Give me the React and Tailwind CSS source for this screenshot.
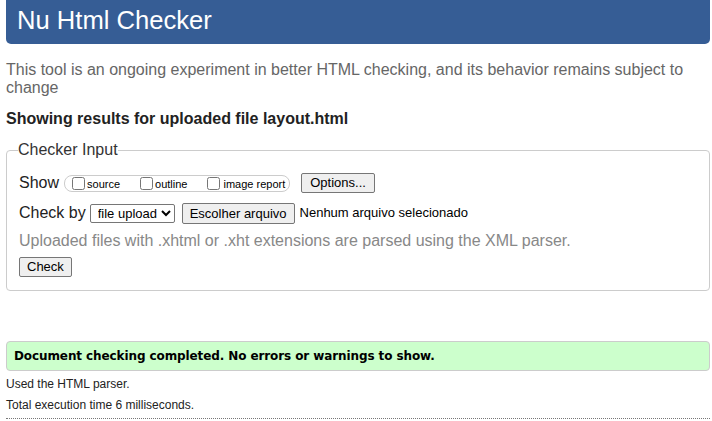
import React from 'react';

export default function App() {
  return (
    <div className="min-h-screen bg-white pl-[6px] pr-[2px] text-black font-['Liberation_Sans',Arial,sans-serif]">
      {/* Header */}
      <h1 className="h-[44px] rounded-b-[5px] bg-[#365d95] pl-[11px] pt-[5px] text-[25.6px] leading-[30px] font-normal text-white">
        Nu Html Checker
      </h1>

      <p className="mt-[17px] text-[16px] leading-[18px] text-[#666]">
        This tool is an ongoing experiment in better HTML checking, and its behavior remains subject to change
      </p>

      <p className="mt-[13px] text-[16px] leading-[18px] font-bold text-[#222]">
        Showing results for uploaded file layout.html
      </p>

      {/* Checker input */}
      <fieldset className="mt-[13px] rounded-[4px] border border-[#ccc] px-[12px] pb-[12px] pt-[4px]">
        <legend className="px-0 text-[16px] leading-[18px] text-[#333] -ml-[1px]">Checker Input</legend>

        <div className="flex items-center h-[22px] mt-[9px]">
          <span className="text-[16px] text-[#222]">Show</span>
          <div className="ml-[5px] flex items-center h-[17px] rounded-[8px] border border-[#ccc] pl-[7px] pr-[4px] text-[11px]">
            <label className="flex items-center mr-[20px]">
              <input type="checkbox" className="m-0 h-[13px] w-[13px]" />
              <span className="ml-[2px] mt-[2px]">source</span>
            </label>
            <label className="flex items-center mr-[20px]">
              <input type="checkbox" className="m-0 h-[13px] w-[13px]" />
              <span className="ml-[2px] mt-[2px]">outline</span>
            </label>
            <label className="flex items-center">
              <input type="checkbox" className="m-0 h-[13px] w-[13px]" />
              <span className="ml-[3px] mt-[2px]">image report</span>
            </label>
          </div>
          <button className="ml-[11px] h-[20px] rounded-[2px] border border-[#767676] bg-[#efefef] px-[8px] text-[13px] leading-[18px] text-black">
            Options...
          </button>
        </div>

        <div className="flex items-center h-[22px] mt-[8px]">
          <span className="text-[16px] text-[#222]">Check by</span>
          <select className="ml-[4px] h-[19px] rounded-[2px] border border-[#767676] bg-white pl-[3px] text-[13px] leading-[17px]">
            <option>file upload</option>
          </select>
          <button className="ml-[7px] h-[21px] rounded-[2px] border border-[#767676] bg-[#efefef] px-[7px] text-[13px] leading-[19px] text-black">
            Escolher arquivo
          </button>
          <span className="ml-[5px] text-[13px] text-black">Nenhum arquivo selecionado</span>
        </div>

        <p className="mt-[8px] text-[16px] leading-[18px] text-[#888]">
          Uploaded files with .xhtml or .xht extensions are parsed using the XML parser.
        </p>

        <button className="mt-[7px] h-[20px] rounded-[2px] border border-[#767676] bg-[#efefef] px-[7px] text-[13px] leading-[18px] text-black">
          Check
        </button>
      </fieldset>

      {/* Result */}
      <div className="mt-[50px] flex h-[30px] items-center rounded-[4px] border border-[#ccc] bg-[#ccffcc] px-[7px] font-['DejaVu_Sans',Verdana,sans-serif] text-[12px] font-bold tracking-[-0.1px] text-black">
        Document checking completed. No errors or warnings to show.
      </div>

      <p className="mt-[5px] text-[12px] leading-[16px] text-[#222]">Used the HTML parser.</p>
      <p className="mt-[5px] text-[12px] leading-[16px] text-[#222]">Total execution time 6 milliseconds.</p>
      <div className="mt-[5px] border-t border-dotted border-[#777]" />
    </div>
  );
}
